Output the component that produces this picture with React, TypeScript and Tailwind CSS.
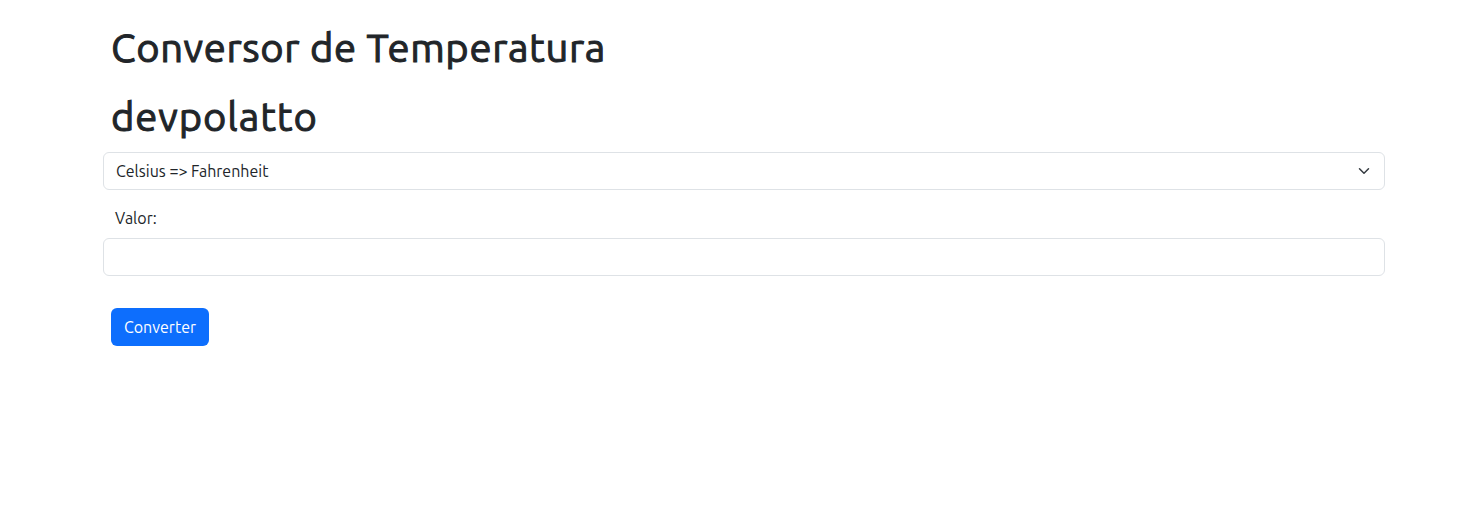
import React from "react";

export default function App() {
  return (
    <div className="min-h-screen bg-white text-[#212529]">
      <div className="ml-[103px] w-[1282px] pt-[24px] font-['Ubuntu','Noto_Sans',sans-serif]">
        <h1 className="ml-[8px] text-[40px] leading-[48px] font-normal tracking-[0.65px] [-webkit-text-stroke-width:1px] [-webkit-text-stroke-color:#212529]">Conversor de Temperatura</h1>
        <h1 className="ml-[8px] mt-[21px] text-[40px] leading-[48px] font-normal tracking-[0.9px] [-webkit-text-stroke-width:1px] [-webkit-text-stroke-color:#212529]">devpolatto</h1>
        <div className="relative mt-[11px] h-[38px] w-full rounded-[6px] border border-[#dee2e6] bg-white">
          <div className="pl-[12px] text-[16px] leading-[36px]">Celsius =&gt; Fahrenheit</div>
          <svg className="absolute right-[12px] top-[12px]" width="16" height="12" viewBox="0 0 16 16">
            <path d="m2 5 6 6 6-6" fill="none" stroke="#343a40" strokeWidth="2" strokeLinecap="round" strokeLinejoin="round" />
          </svg>
        </div>
        <div className="ml-[12px] mt-[16px] text-[16px] leading-[24px]">Valor:</div>
        <div className="mt-[8px] h-[38px] w-full rounded-[6px] border border-[#dee2e6] bg-white"></div>
        <button className="ml-[8px] mt-[32px] h-[38px] w-[98px] rounded-[6px] bg-[#0d6efd] text-[16px] text-white">Converter</button>
      </div>
    </div>
  );
}
